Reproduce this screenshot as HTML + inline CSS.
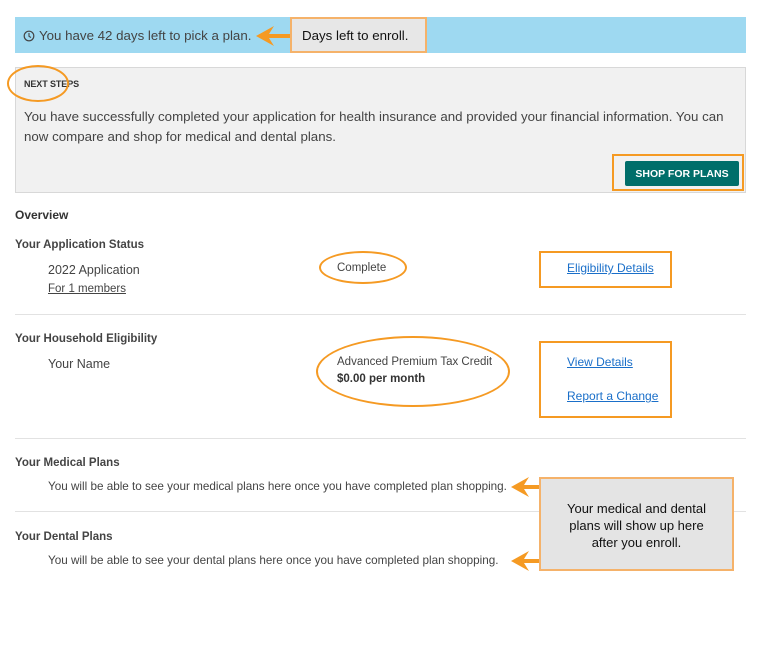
<!DOCTYPE html>
<html><head><meta charset="utf-8"><style>
body{margin:0;width:760px;height:647px;background:#fff;position:relative;font-family:"Liberation Sans",Arial,sans-serif;color:#444;overflow:hidden}
.a{position:absolute;white-space:nowrap;line-height:16px}
.b{font-weight:bold}
.l{color:#1a6fc9;text-decoration:underline;font-size:12px}
.o{position:absolute;border:2px solid #f59a23;box-sizing:border-box}
.e{position:absolute;border:2px solid #f59a23;border-radius:50%;box-sizing:border-box}
.hr{position:absolute;left:15px;width:731px;height:1px;background:#e2e2e2}
</style></head><body>
<div style="position:absolute;left:15px;top:17px;width:731px;height:36px;background:#9ed9f1"></div>
<svg class="a" style="left:23px;top:30px" width="12" height="12" viewBox="0 0 12 12"><circle cx="6" cy="6" r="4.8" fill="none" stroke="#444" stroke-width="1.2"/><path d="M6 3v3.3l2 1.2" fill="none" stroke="#444" stroke-width="1.1"/></svg>
<div class="a" style="left:39px;top:28px;font-size:13.3px">You have 42 days left to pick a plan.</div>
<svg style="position:absolute;left:256px;top:26px" width="36" height="20"><polygon points="0,10 18,0 13,8 36,8 36,12 13,12 18,20" fill="#f59a23"/></svg>
<div style="position:absolute;left:290px;top:17px;width:137px;height:36px;background:#e7e7e7;border:2px solid #f5b26a;box-sizing:border-box"></div>
<div class="a" style="left:302px;top:28px;font-size:13.3px;color:#111">Days left to enroll.</div>

<div style="position:absolute;left:15px;top:67px;width:731px;height:126px;background:#f1f1f1;border:1px solid #d8d8d8;box-sizing:border-box"></div>
<div class="a b" style="left:24px;top:76px;font-size:9px;color:#333;letter-spacing:-0.1px">NEXT STEPS</div>
<div class="e" style="left:7px;top:65px;width:62px;height:37px"></div>
<div class="a" style="left:24px;top:109px;font-size:13.3px">You have successfully completed your application for health insurance and provided your financial information. You can</div>
<div class="a" style="left:24px;top:129px;font-size:13.3px">now compare and shop for medical and dental plans.</div>
<div style="position:absolute;left:625px;top:161px;width:114px;height:25px;background:#006e6a;border-radius:2px"></div>
<div class="a b" style="left:625px;top:166px;width:114px;text-align:center;font-size:10.5px;color:#fff">SHOP FOR PLANS</div>
<div class="o" style="left:612px;top:154px;width:132px;height:37px"></div>

<div class="a b" style="left:15px;top:207px;font-size:12px;color:#333">Overview</div>
<div class="a b" style="left:15px;top:237px;font-size:11.5px">Your Application Status</div>
<div class="a" style="left:48px;top:262px;font-size:12.5px">2022 Application</div>
<div class="a" style="left:48px;top:281px;font-size:11.5px;text-decoration:underline">For 1 members</div>
<div class="a" style="left:337px;top:260px;font-size:11.5px">Complete</div>
<div class="e" style="left:319px;top:251px;width:88px;height:33px"></div>
<div class="a l" style="left:567px;top:260px">Eligibility Details</div>
<div class="o" style="left:539px;top:251px;width:133px;height:37px"></div>
<div class="hr" style="top:314px"></div>

<div class="a b" style="left:15px;top:331px;font-size:11.5px">Your Household Eligibility</div>
<div class="a" style="left:48px;top:356px;font-size:12.5px">Your Name</div>
<div class="a" style="left:337px;top:354px;font-size:11.5px">Advanced Premium Tax Credit</div>
<div class="a b" style="left:337px;top:371px;font-size:11.5px;color:#333">$0.00 per month</div>
<div class="e" style="left:316px;top:336px;width:194px;height:71px"></div>
<div class="a l" style="left:567px;top:354px">View Details</div>
<div class="a l" style="left:567px;top:388px">Report a Change</div>
<div class="o" style="left:539px;top:341px;width:133px;height:77px"></div>
<div class="hr" style="top:438px"></div>

<div class="a b" style="left:15px;top:455px;font-size:11.5px">Your Medical Plans</div>
<div class="a" style="left:48px;top:479px;font-size:11.7px">You will be able to see your medical plans here once you have completed plan shopping.</div>
<div class="hr" style="top:511px;width:525px"></div>
<div class="a b" style="left:15px;top:529px;font-size:11.5px">Your Dental Plans</div>
<div class="a" style="left:48px;top:553px;font-size:11.7px">You will be able to see your dental plans here once you have completed plan shopping.</div>
<div class="hr" style="top:511px;left:733px;width:13px"></div>
<svg style="position:absolute;left:511px;top:477px" width="30" height="20"><polygon points="0,10 18,0 13,8 30,8 30,12 13,12 18,20" fill="#f59a23"/></svg>
<svg style="position:absolute;left:511px;top:551px" width="30" height="20"><polygon points="0,10 18,0 13,8 30,8 30,12 13,12 18,20" fill="#f59a23"/></svg>
<div style="position:absolute;left:539px;top:477px;width:195px;height:94px;background:#e4e4e4;border:2px solid #f5b26a;box-sizing:border-box"></div>
<div class="a" style="left:556px;top:500px;width:161px;text-align:center;font-size:13px;line-height:17px;color:#111;white-space:normal">Your medical and dental plans will show up here after you enroll.</div>
</body></html>
